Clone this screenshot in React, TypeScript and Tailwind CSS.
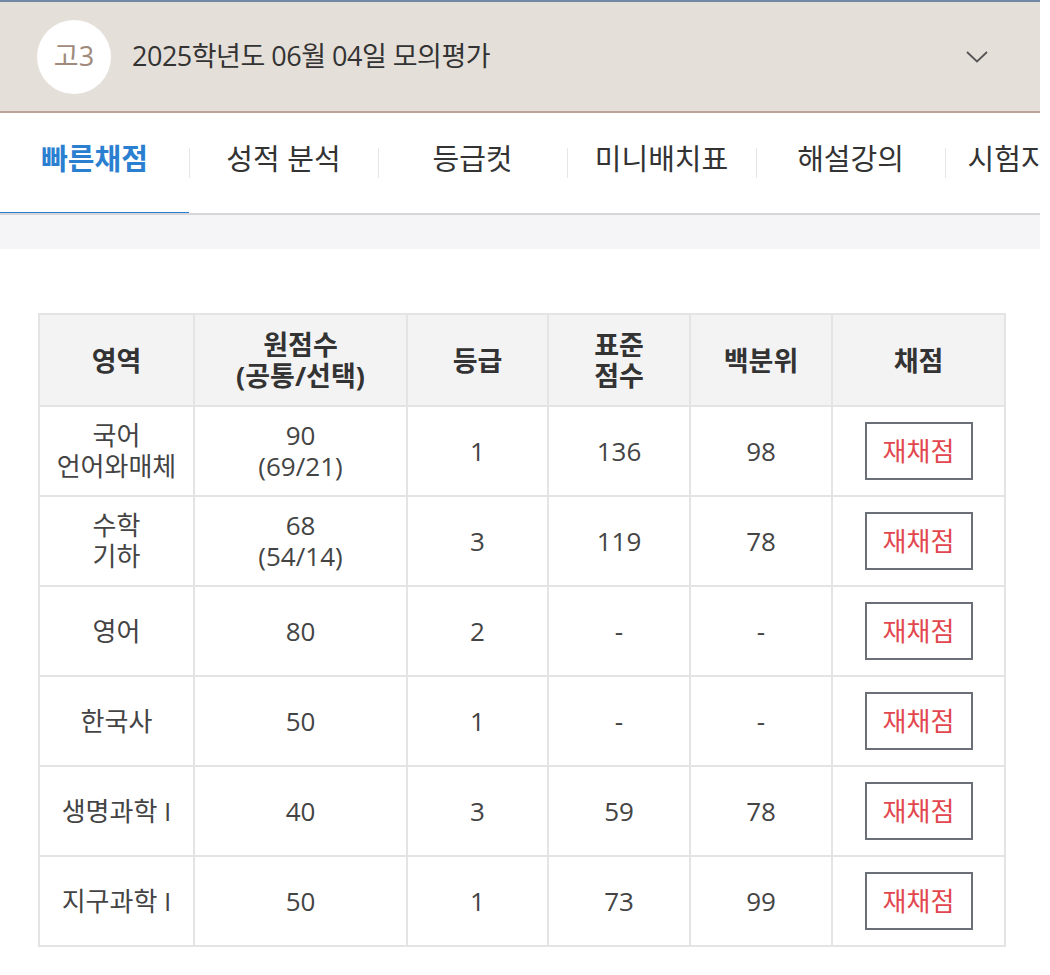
const tabs = ["빠른채점", "성적 분석", "등급컷", "미니배치표", "해설강의", "시험지/정답"];

type Row = {
  subject: string[];
  raw: string[];
  grade: string;
  std: string;
  pct: string;
};

const rows: Row[] = [
  { subject: ["국어", "언어와매체"], raw: ["90", "(69/21)"], grade: "1", std: "136", pct: "98" },
  { subject: ["수학", "기하"], raw: ["68", "(54/14)"], grade: "3", std: "119", pct: "78" },
  { subject: ["영어"], raw: ["80"], grade: "2", std: "-", pct: "-" },
  { subject: ["한국사"], raw: ["50"], grade: "1", std: "-", pct: "-" },
  { subject: ["생명과학 I"], raw: ["40"], grade: "3", std: "59", pct: "78" },
  { subject: ["지구과학 I"], raw: ["50"], grade: "1", std: "73", pct: "99" },
];

const Lines = ({ lines }: { lines: string[] }) => (
  <>
    {lines.map((l, i) => (
      <div key={i}>{l}</div>
    ))}
  </>
);

const cell = "border-2 border-[#e4e4e4]";

const App = () => {
  return (
    <div
      className="w-[1040px] bg-white"
      style={{ fontFamily: '"Open Sans", "Noto Sans CJK KR", sans-serif' }}
    >
      {/* Exam header */}
      <div className="h-[113px] border-t-2 border-[#7189a6] border-b-2 border-b-[#bca397] bg-[#e5dfd9] flex items-center pl-[37px] pr-[52px]">
        <div className="w-[74px] h-[74px] rounded-full bg-white flex items-center justify-center text-[27px] text-[#9f8a7c]">
          고3
        </div>
        <div className="ml-[21px] text-[27px] text-[#333] tracking-[-0.5px]">
          2025학년도 06월 04일 모의평가
        </div>
        <svg className="ml-auto" width="22" height="12" viewBox="0 0 22 12" fill="none">
          <polyline points="1,1 11,10.5 21,1" stroke="#555" strokeWidth="1.8" />
        </svg>
      </div>

      {/* Tabs */}
      <div className="flex h-[102px] border-b-2 border-[#d6d6d8] overflow-hidden">
        {tabs.map((t, i) => (
          <div
            key={t}
            className={`relative shrink-0 w-[189px] flex items-center justify-center text-[29px] pb-[8px] ${
              i === 0 ? "text-[#2b7fd1] font-bold" : "text-[#333]"
            }`}
          >
            <span className="whitespace-nowrap">{t}</span>
            {i > 0 && (
              <span className="absolute left-0 top-[35px] h-[30px] w-px bg-[#e6e6e6]" />
            )}
            {i === 0 && (
              <span className="absolute left-0 right-0 -bottom-[2px] h-[3px] bg-[#2b7fd1]" />
            )}
          </div>
        ))}
      </div>
      <div className="h-[34px] bg-[#f5f5f7]" />

      {/* Score table */}
      <div className="pt-[64px] pl-[38px] pb-[27px]">
        <table className="w-[966px] border-collapse table-fixed text-[26px] leading-[31px] text-center">
          <colgroup>
            <col className="w-[155px]" />
            <col className="w-[213px]" />
            <col className="w-[141px]" />
            <col className="w-[142px]" />
            <col className="w-[142px]" />
            <col className="w-[173px]" />
          </colgroup>
          <thead>
            <tr className="h-[92px] bg-[#f3f3f4] text-[#333] font-bold text-[27px]">
              <th className={cell}>영역</th>
              <th className={cell}>
                <Lines lines={["원점수", "(공통/선택)"]} />
              </th>
              <th className={cell}>등급</th>
              <th className={cell}>
                <Lines lines={["표준", "점수"]} />
              </th>
              <th className={cell}>백분위</th>
              <th className={cell}>채점</th>
            </tr>
          </thead>
          <tbody className="text-[#444]">
            {rows.map((r) => (
              <tr key={r.subject.join()} className="h-[90px]">
                <td className={cell}>
                  <Lines lines={r.subject} />
                </td>
                <td className={cell}>
                  <Lines lines={r.raw} />
                </td>
                <td className={cell}>{r.grade}</td>
                <td className={cell}>{r.std}</td>
                <td className={cell}>{r.pct}</td>
                <td className={cell}>
                  <button className="w-[108px] h-[58px] border-2 border-[#6b6f77] bg-white text-[#e2474f] text-[26px]">
                    재채점
                  </button>
                </td>
              </tr>
            ))}
          </tbody>
        </table>
      </div>
    </div>
  );
};

export default App;
